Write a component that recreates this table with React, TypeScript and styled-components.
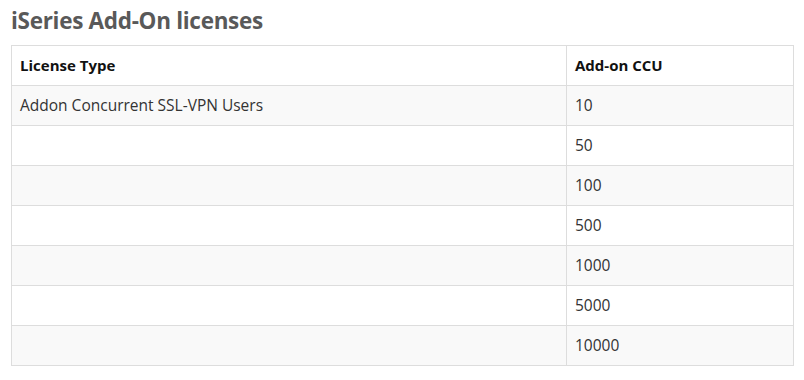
import React from "react";
import styled, { createGlobalStyle } from "styled-components";

const GlobalStyle = createGlobalStyle`
    body {
        margin: 0;
        background: #ffffff;
        font-family: "Open Sans", "Noto Sans", sans-serif;
    }
`;

const Page = styled.div`
    padding: 5px 11px 0 11px;
    width: 783px;
`;

const Heading = styled.h3`
    margin: 0 0 8px 0;
    font-size: 22.5px;
    line-height: 32px;
    font-weight: 700;
    color: #595959;
    letter-spacing: -0.3px;
`;

const Table = styled.table`
    width: 783px;
    border-collapse: collapse;
    border: 1px solid #dddddd;
`;

const HeadCell = styled.th<{ $wide?: boolean }>`
    width: ${(p) => (p.$wide ? "538px" : "auto")};
    text-align: left;
    padding: 8px;
    line-height: 23px;
    font-size: 15px;
    font-weight: 700;
    color: #111111;
    border: 1px solid #dddddd;
`;

const Row = styled.tr<{ $striped: boolean }>`
    background: ${(p) => (p.$striped ? "#f9f9f9" : "#ffffff")};
`;

const Cell = styled.td`
    padding: 8px;
    line-height: 23px;
    font-size: 15.5px;
    color: #333333;
    border: 1px solid #dddddd;
`;

const rows = [
    { type: "Addon Concurrent SSL-VPN Users", ccu: "10" },
    { type: "", ccu: "50" },
    { type: "", ccu: "100" },
    { type: "", ccu: "500" },
    { type: "", ccu: "1000" },
    { type: "", ccu: "5000" },
    { type: "", ccu: "10000" }
];

const App: React.FC = () => {
    return (
        <>
            <GlobalStyle />
            <Page>
                <Heading>iSeries Add-On licenses</Heading>
                <Table>
                    <thead>
                        <tr>
                            <HeadCell $wide>License Type</HeadCell>
                            <HeadCell>Add-on CCU</HeadCell>
                        </tr>
                    </thead>
                    <tbody>
                        {rows.map((row, i) => (
                            <Row key={row.ccu} $striped={i % 2 === 0}>
                                <Cell>{row.type}</Cell>
                                <Cell>{row.ccu}</Cell>
                            </Row>
                        ))}
                    </tbody>
                </Table>
            </Page>
        </>
    );
};

export default App;
